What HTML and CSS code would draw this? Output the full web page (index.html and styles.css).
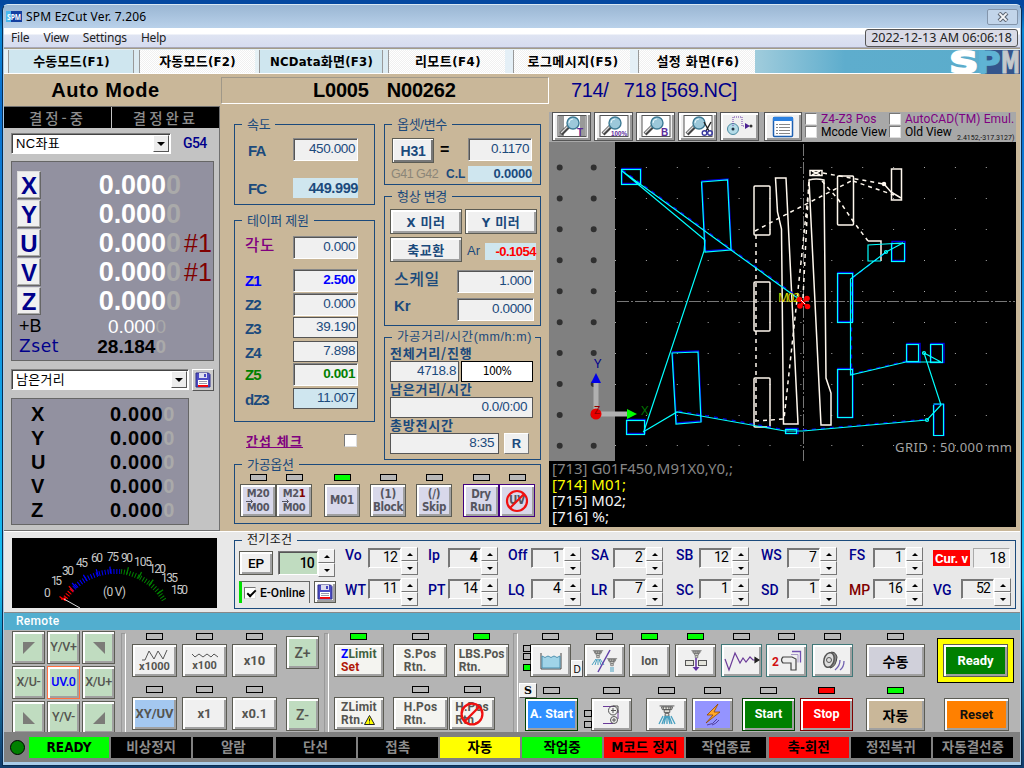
FILE: index.html
```html
<!DOCTYPE html>
<html lang="ko">
<head>
<meta charset="utf-8">
<title>SPM EzCut Ver. 7.206</title>
<link rel="stylesheet" href="styles.css">
</head>
<body>
<svg class="defs" width="0" height="0">
  <symbol id="mag" viewBox="0 0 30 22">
    <path d="M4 19 12 11" stroke="#444" stroke-width="4"/><path d="M4 18 12 10" stroke="#ddd" stroke-width="1.5"/>
    <circle cx="16" cy="8" r="6" fill="#9cc8da" stroke="#3d7a94" stroke-width="1.4"/><path d="M12 8a4 4 0 0 1 4-4" stroke="#e4f5fb" fill="none"/>
  </symbol>
  <symbol id="floppy" viewBox="0 0 16 16">
    <path d="M1 1h12.5L15 2.5V15H1z" fill="#4c4cc4" stroke="#30308a"/><rect x="4" y="1" width="8" height="5" fill="#dde"/><rect x="9" y="2" width="2" height="3" fill="#4646c0"/>
    <rect x="3" y="8" width="10" height="6" fill="#fff"/><path d="M4 9.5h8M4 11.5h8" stroke="#99a"/><rect x="3" y="13" width="10" height="1.8" fill="red"/>
  </symbol>
  <symbol id="ban" viewBox="0 0 24 24"><circle cx="12" cy="12" r="10" fill="none" stroke="#f01010" stroke-width="2.2"/><path d="M19 5 5 19" stroke="#f01010" stroke-width="2.2"/></symbol>
  <symbol id="arrow" viewBox="0 0 8 5"><path d="M0 2.500h6M4.500 .5l2 2-2 2" fill="none" stroke="#555560"/></symbol>
  <symbol id="nozzle" viewBox="0 0 16 14"><path d="M0 1h16M2 2h12l-1 3H3zM5 5h6v3H5zM6 9h4v3H6z" fill="#e8e8e0" stroke="#555"/><path d="M4 2v3M7 2v3M10 2v3M12 2v3" stroke="#555"/></symbol>
</svg>
<div class="window">
  <header class="titlebar">
    <svg width="16" height="11" viewBox="0 0 16 11"><rect width="16" height="11" fill="#1440a0"/><rect width="5" height="11" fill="#48b8f0"/><text x="1" y="9" font-size="9" font-weight="bold" fill="#fff" textLength="14" lengthAdjust="spacingAndGlyphs">SPM</text></svg>
    <span class="title">SPM EzCut Ver. 7.206</span>
    <span class="close"><svg width="12" height="10" viewBox="0 0 12 10"><path d="M2 1 10 9M10 1 2 9" stroke="#5c6674" stroke-width="4"/><path d="M2.4 1.4 9.6 8.6M9.6 1.4 2.4 8.6" stroke="#f4f6f8" stroke-width="2"/></svg></span>
  </header>
  <nav class="menubar"><span>File</span><span>View</span><span>Settings</span><span>Help</span><span class="clock">2022-12-13 AM 06:06:18</span></nav>
  <nav class="tabs">
    <div class="tab t1 blue">수동모드(F1)</div><div class="tab t2">자동모드(F2)</div><div class="tab t3 blue">NCData화면(F3)</div>
    <div class="tab t4">리모트(F4)</div><div class="tab t5">로그메시지(F5)</div><div class="tab t6">설정 화면(F6)</div>
    <div class="brand"><svg width="70" height="24" viewBox="950 49 70 24"><rect x="981" y="49" width="39" height="24" fill="#34558c"/><path d="M981 49h4q-6 12 0 24h-4z" fill="#5aaecb"/>
      <g font-weight="bold" font-size="30" stroke-width="2"><text x="949.500" y="72" fill="#fff" stroke="#fff" textLength="29" lengthAdjust="spacingAndGlyphs">S</text><text x="977" y="72" fill="#5fb3d4" stroke="#5fb3d4" stroke-width="1" textLength="24" lengthAdjust="spacingAndGlyphs">P</text><text x="1001" y="72" fill="#c4c8cc" stroke="#c4c8cc" stroke-width="1" textLength="19" lengthAdjust="spacingAndGlyphs">M</text></g></svg></div>
  </nav>

  <main class="main">
    <section class="left">
      <h1>Auto Mode</h1>
      <div class="coords">
        <div class="decide"><span>결정-중</span><span>결정완료</span></div>
        <div class="selrow"><div class="select s1"><span>NC좌표</span><i></i></div><b class="g54">G54</b></div>
        <div class="axes">
          <div class="axis"><b class="ax">X</b><b class="num">0.000<em>0</em></b></div>
          <div class="axis"><b class="ax">Y</b><b class="num">0.000<em>0</em></b></div>
          <div class="axis"><b class="ax">U</b><b class="num">0.000<em>0</em></b><span class="hash">#1</span></div>
          <div class="axis"><b class="ax">V</b><b class="num">0.000<em>0</em></b><span class="hash">#1</span></div>
          <div class="axis"><b class="ax">Z</b><b class="num">0.000<em>0</em></b></div>
          <div class="sub"><span class="k">+B</span><span class="v white">0.000<em>0</em></span></div>
          <div class="sub"><span class="k navy">Zset</span><span class="v bold">28.184<em>0</em></span></div>
        </div>
        <div class="selrow two"><div class="select s2"><span>남은거리</span><i></i></div><span class="save"><svg width="16" height="16"><use href="#floppy"/></svg></span></div>
        <div class="remain">
          <div><b>X</b><b>0.000<em>0</em></b></div><div><b>Y</b><b>0.000<em>0</em></b></div><div><b>U</b><b>0.000<em>0</em></b></div><div><b>V</b><b>0.000<em>0</em></b></div><div><b>Z</b><b>0.000<em>0</em></b></div>
        </div>
      </div>
    </section>

    <section class="right">
      <div class="prog"><div class="lbox"><span>L0005</span><span>N00262</span></div><div class="nc">714/&nbsp;&nbsp; 718 [569.NC]</div></div>
      <div class="body">
        <div class="mid">
          <div class="cols">
            <div class="colA">
              <div class="group speed"><span class="lg">속도</span>
                <div class="row fa"><b>FA</b><span class="f in">450.000</span></div>
                <div class="row fc"><b>FC</b><span class="f lit">449.999</span></div>
              </div>
              <div class="group taper"><span class="lg">테이퍼 제원</span>
                <div class="tg">
                  <span class="ang">각도</span><span class="f in">0.000</span>
                  <b class="c-blue">Z1</b><span class="f in c-blue bold">2.500</span>
                  <b>Z2</b><span class="f in">0.000</span>
                  <b>Z3</b><span class="f flat">39.190</span>
                  <b>Z4</b><span class="f flat">7.898</span>
                  <b class="c-green">Z5</b><span class="f in c-green bold">0.001</span>
                  <b>dZ3</b><span class="f flat cy">11.007</span>
                </div>
              </div>
              <div class="inter"><u>간섭 체크</u><i class="cb"></i></div>
            </div>
            <div class="colB">
              <div class="group offset"><span class="lg">옵셋/변수</span>
                <div class="row o1"><span class="btn h31">H31</span><b class="eq">=</b><span class="f in">0.1170</span></div>
                <div class="row o2"><span class="g41">G41 G42</span><b class="cl">C.L</b><span class="f lit">0.0000</span></div>
              </div>
              <div class="group shape"><span class="lg">형상 변경</span>
                <div class="row m1"><span class="btn">X 미러</span><span class="btn">Y 미러</span></div>
                <div class="row m2"><span class="btn">축교환</span><span class="ar">Ar</span><span class="f lit red">-0.1054</span></div>
                <div class="row m3"><b class="ko">스케일</b><span class="f in">1.000</span></div>
                <div class="row m4"><b>Kr</b><span class="f in">0.0000</span></div>
              </div>
              <div class="group dist"><span class="lg">가공거리/시간(mm/h:m)</span>
                <b class="dl">전체거리/진행</b>
                <div class="row"><span class="f flat w69">4718.8</span><span class="pct">100%</span></div>
                <b class="dl">남은거리/시간</b>
                <div class="row"><span class="f flat w143">0.0/0:00</span></div>
                <b class="dl">총방전시간</b>
                <div class="row"><span class="f flat w109">8:35</span><span class="rbtn">R</span></div>
              </div>
            </div>
          </div>
          <div class="group opts"><span class="lg">가공옵션</span>
            <div class="og">
              <div class="u"><i class="led"></i><span class="btn ob two-l">M20<br>M00<svg class="arr" width="8" height="5"><use href="#arrow"/></svg></span></div>
              <div class="u"><i class="led"></i><span class="btn ob two-l"><span>M2<s>1</s></span>M00<svg class="arr" width="8" height="5"><use href="#arrow"/></svg></span></div>
              <div class="u"><i class="led on"></i><span class="btn ob">M01</span></div>
              <div class="u"><i class="led"></i><span class="btn ob">(1)<br>Block</span></div>
              <div class="u"><i class="led"></i><span class="btn ob">(/)<br>Skip</span></div>
              <div class="u"><i class="led"></i><span class="btn ob pur">Dry<br>Run</span></div>
              <div class="u"><i class="led"></i><span class="btn ob pur">UV<svg class="over" width="24" height="24"><use href="#ban"/></svg></span></div>
            </div>
          </div>
        </div>

        <div class="view">
          <div class="toolbar">
            <span class="tb"><svg width="30" height="23" viewBox="0 0 30 23"><rect x="1" y="0.5" width="28" height="21" fill="#fff" stroke="#555"/><rect x="2" y="1" width="5" height="20" fill="#999"/><rect x="23" y="1" width="5" height="20" fill="#999"/><use href="#mag" width="30" height="22"/><text x="20" y="21" class="tl">T</text></svg></span>
            <span class="tb"><svg width="30" height="23" viewBox="0 0 30 23"><rect x="1" y="0.5" width="28" height="21" fill="#fff" stroke="#555"/><use href="#mag" width="30" height="22"/><text x="12" y="21" font-size="8" font-weight="bold" fill="#5a2a9a" textLength="16" lengthAdjust="spacingAndGlyphs">100%</text></svg></span>
            <span class="tb"><svg width="30" height="23" viewBox="0 0 30 23"><rect x="1" y="0.5" width="28" height="21" fill="#fff" stroke="#555"/><use href="#mag" width="30" height="22"/><text x="20" y="21" class="tl">B</text></svg></span>
            <span class="tb"><svg width="30" height="23" viewBox="0 0 30 23"><rect x="1" y="0.5" width="28" height="21" fill="#fff" stroke="#555"/><use href="#mag" width="30" height="22"/><path d="M21 7l5 9M28 7l-5 9" stroke="#222" stroke-width="1.4"/><circle cx="21.500" cy="18" r="2.300" fill="none" stroke="#3a3aa0" stroke-width="1.400"/><circle cx="27" cy="18" r="2.300" fill="none" stroke="#3a3aa0" stroke-width="1.400"/></svg></span>
            <span class="tb"><svg width="30" height="23" viewBox="0 0 30 23"><circle cx="8" cy="14" r="5.500" fill="#b4dce8" stroke="#4a8aa0"/><circle cx="8" cy="14" r="1.500" fill="#234"/><path d="M8 11V2h9v9h4" fill="none" stroke="#6a3aa8" stroke-dasharray="1 1"/><path d="M20 8l5 3-5 3z" fill="#4a2090"/><circle cx="26" cy="11" r="1.500" fill="#333"/></svg></span>
            <span class="tb last"><svg width="22" height="22" viewBox="0 0 22 22"><rect x="1.500" y="1.500" width="19" height="19" rx="1" fill="#fff" stroke="#1c5fb0" stroke-width="1.500"/><rect x="1" y="1" width="20" height="4" fill="#2a80e0"/><path d="M4 8.500h2M4 11.500h2M4 14.500h2M4 17.500h2M7 8.500h11M7 11.500h11M7 14.500h11M7 17.500h11" stroke="#888"/></svg></span>
            <div class="checks">
              <div><i class="cb"></i><span class="pp c1">Z4-Z3 Pos</span><i class="cb"></i><span class="pp">AutoCAD(TM) Emul.</span></div>
              <div><i class="cb"></i><span class="c1">Mcode View</span><i class="cb"></i><span class="ov">Old View</span><small>2.4152,-317.3127)</small></div>
            </div>
          </div>
          <svg class="cad" width="467" height="385" viewBox="549 142 467 385" fill="none">
            <rect x="549" y="142" width="467" height="385" fill="#000"/>
            <rect x="549" y="142" width="66" height="319" fill="#808080"/>
            <g stroke="#303030" stroke-width="6" stroke-linecap="round" stroke-dasharray="0 30.93"><path d="M559.700 167.500V450"/><path d="M593.700 167.500V450"/></g>
            <g stroke="#aaa" stroke-dasharray="1 29.900"><path d="M615 167.500h380M615 198.500h380M615 229.500h380M615 260.500h380M615 291.500h380M615 322.500h380M615 353.500h380M615 384.500h380M615 415.500h380M615 445.500h380"/></g>
            <path d="M617 301.500h398M803.500 144v317" stroke="#777" stroke-dasharray="12 2 2 2"/>
            <g stroke="#fff8ee" stroke-width="1.500">
              <rect x="754" y="186" width="16" height="49" rx="1"/><rect x="754" y="282" width="16" height="49" rx="1"/><rect x="754" y="378" width="16" height="49" rx="1"/>
              <rect x="837.500" y="176" width="16" height="49" rx="1"/><rect x="891.500" y="169" width="10" height="31"/><rect x="810" y="170.500" width="12" height="5"/>
              <path d="M868 241h13v20M775.500 178h10.500l12 246h-14.500l-2-195-4-17zM809 180q7-2 15 0l2 198 5 15v32h-10z"/>
              <circle cx="884" cy="184" r="1.500" fill="#fff"/><path d="M812 171l8 4M812 175l8-4M884 184l7 8 10 6"/>
              <path stroke-dasharray="4 4" d="M755 231l28-15 70-36M756 235v185M755 421l29-2 10-92 8-74 7-68M803 298l6-120M823 173l61 11M853 181l41 14M822 181l16 18 15 22 15 20"/>
            </g>
            <g stroke="#0000e0" stroke-width="1.400" transform="translate(.5,-1)">
              <rect x="621.500" y="169.500" width="19" height="15"/><path d="M701.500 182l26-2 3.500 70-26 2zM672 353l26-1 3 70-25 2z"/><rect x="626.500" y="420.500" width="18" height="14"/>
              <rect x="785.500" y="429.500" width="12" height="5"/><rect x="933.500" y="405.500" width="10" height="31"/><rect x="906.500" y="344.500" width="13" height="19"/><rect x="930.500" y="344.500" width="13" height="19"/><rect x="837.500" y="369.500" width="15" height="49"/><rect x="837.500" y="273.500" width="15" height="49"/><rect x="891.500" y="242.500" width="13" height="19"/>
              <path stroke-dasharray="4 5" d="M622 171l109 79 72 52M678 412l24 4 84 15h18l124-11M906 362l-55 13V279M852 279l35-27"/>
            </g>
            <g stroke="#00ffff" stroke-width="1.200">
              <rect x="621.500" y="169.500" width="19" height="15"/><path d="M701.500 182l26-2 3.500 70-26 2zM672 353l26-1 3 70-25 2z"/><rect x="626.500" y="420.500" width="18" height="14"/>
              <path d="M622 171l83 69-1 11-60 180M622 171l109 79 72 52M643 432l34-20 24 4 84 15h18l124-11 14-15-17-52 17 9h-35l-55.500 13V279l35.500-27 17-9-35 2v16h13"/>
              <rect x="785.500" y="429.500" width="11" height="4"/><path d="M933.500 405v30.500h10V404h-10"/><rect x="906.500" y="344.500" width="12" height="17"/><rect x="930.500" y="344.500" width="12" height="18"/><rect x="837.500" y="369.500" width="15" height="48"/><rect x="837.500" y="273.500" width="15" height="49"/><rect x="891.500" y="243.500" width="13" height="18"/>
              <circle cx="927" cy="420" r="1.500"/><circle cx="924" cy="353" r="1.500"/><circle cx="886" cy="252" r="1.500"/>
            </g>
            <text x="778" y="302" fill="#d8d800" font-size="12" textLength="22" class="ns">M02</text>
            <g fill="red"><circle cx="799.500" cy="299.500" r="2.800"/><circle cx="807" cy="298.500" r="2.800"/><circle cx="800" cy="306" r="2.800"/><circle cx="807.500" cy="306.500" r="2.800"/></g><path d="M799 299l9 8M807 298l-7 8" stroke="red" stroke-width="2"/><path d="M801 300l4 4" stroke="#fff"/>
            <rect x="593.500" y="383" width="5" height="29" fill="#b0b0b0"/><rect x="598" y="411.500" width="29" height="5" fill="#b0b0b0"/><path d="M596 373l5 10h-10z" fill="#0000e8"/><path d="M637 414l-10-5v10z" fill="#00ff00"/><circle cx="596" cy="414" r="5.500" fill="#e80000"/>
            <g class="ns" font-size="13"><text x="594" y="368" fill="#00008c">Y</text><text x="641" y="415" fill="#007000">X</text><text x="594" y="414" fill="#8c0000" font-size="11">Z</text>
            <text x="895" y="452" fill="#a4a4a4" textLength="117">GRID : 50.000 mm</text></g>
            <g class="ns" font-size="14" fill="#f4f4f4"><text x="552" y="474" fill="#868686" textLength="181" lengthAdjust="spacingAndGlyphs">[713] G01F450,M91X0,Y0,;</text><text x="552" y="490" fill="#ff0" textLength="74" lengthAdjust="spacingAndGlyphs">[714] M01;</text><text x="552" y="506" textLength="74" lengthAdjust="spacingAndGlyphs">[715] M02;</text><text x="552" y="522" textLength="57" lengthAdjust="spacingAndGlyphs">[716] %;</text></g>
          </svg>
        </div>
      </div>
    </section>
  </main>

  <section class="elec">
    <svg class="meter" width="205" height="70" viewBox="12 538 205 70" fill="none"><rect x="12" y="538" width="205" height="70" fill="#000"/>
      <g stroke-width="5" stroke-dasharray="1 1.900"><path d="M64 600A60 58 0 0 1 72 590" stroke="red"/><path d="M72 590A60 58 0 0 1 120 571.500" stroke="#0000ff"/><path d="M121 571.500A60 58 0 0 1 164 600" stroke="#008000"/></g>
      <g stroke-width="7" stroke-dasharray="1.200 12"><path d="M62 599A60 58 0 0 1 72 588" stroke="red"/><path d="M74 586A60 58 0 0 1 120 570" stroke="#0000ff"/><path d="M127 570.500A60 58 0 0 1 165 599" stroke="#008000"/></g>
      <path d="M61 599l5-1" stroke="red" stroke-width="1.500"/><path d="M64 599l16 9" stroke="#ddd"/>
      <g fill="#c8c8c8" font-size="12" class="rb"><text x="44" y="597">0</text><text x="51" y="585" textLength="11">15</text><text x="62" y="575" textLength="12">30</text><text x="76" y="567" textLength="12">45</text><text x="91" y="562" textLength="12">60</text><text x="107" y="561" textLength="12">75</text><text x="121" y="562" textLength="12">90</text><text x="134" y="566" textLength="18">105</text><text x="149" y="573" textLength="17">120</text><text x="161" y="582" textLength="17">135</text><text x="171" y="594" textLength="17">150</text><text x="103" y="596" textLength="23">(0 V)</text></g>
    </svg>
    <div class="group cond"><span class="lg">전기조건</span>
      <div class="cw">
        <div class="ep">
          <div class="row"><span class="btn epb">EP</span><span class="tens">10</span><span class="spin big"><i></i><i></i></span></div>
          <div class="row"><span class="eon"><i class="cb chk"></i>E-Online</span><span class="btn sv"><svg width="16" height="16"><use href="#floppy"/></svg></span></div>
        </div>
        <div class="params">
          <div class="p w23"><b>Vo</b><span>12</span><div class="spin"><i></i><i></i></div></div>
          <div class="p w20"><b>Ip</b><span class="bold">4</span><div class="spin"><i></i><i></i></div></div>
          <div class="p w23"><b>Off</b><span>1</span><div class="spin"><i></i><i></i></div></div>
          <div class="p w22"><b>SA</b><span>2</span><div class="spin"><i></i><i></i></div></div>
          <div class="p w23"><b>SB</b><span>12</span><div class="spin"><i></i><i></i></div></div>
          <div class="p w26"><b>WS</b><span>7</span><div class="spin"><i></i><i></i></div></div>
          <div class="p w24"><b>FS</b><span>1</span><div class="spin"><i></i><i></i></div></div>
          <div class="p cur"><b>Cur. v</b><span>18</span></div>
          <div class="p w23"><b>WT</b><span>11</span><div class="spin"><i></i><i></i></div></div>
          <div class="p w20"><b>PT</b><span>14</span><div class="spin"><i></i><i></i></div></div>
          <div class="p w23"><b>LQ</b><span>4</span><div class="spin"><i></i><i></i></div></div>
          <div class="p w22"><b>LR</b><span>7</span><div class="spin"><i></i><i></i></div></div>
          <div class="p w23"><b>SC</b><span>1</span><div class="spin"><i></i><i></i></div></div>
          <div class="p w26"><b>SD</b><span>1</span><div class="spin"><i></i><i></i></div></div>
          <div class="p w24"><b class="mp">MP</b><span>16</span><div class="spin"><i></i><i></i></div></div>
          <div class="p w28"><b>VG</b><span>52</span><div class="spin"><i></i><i></i></div></div>
        </div>
      </div>
    </div>
  </section>

  <div class="rhead">Remote</div>
  <section class="remote">
    <div class="pad">
      <span class="btn"><svg width="12" height="12"><path d="M0 0h12L0 12z"/></svg></span><span class="btn">Y/V+</span><span class="btn"><svg width="12" height="12"><path d="M0 0h12v12z"/></svg></span>
      <span class="btn">X/U-</span><span class="btn home">UV.0</span><span class="btn">X/U+</span>
      <span class="btn"><svg width="12" height="12"><path d="M0 0v12h12z"/></svg></span><span class="btn">Y/V-</span><span class="btn"><svg width="12" height="12"><path d="M12 0v12H0z"/></svg></span>
    </div>
    <i class="sep"></i>
    <div class="steps">
      <div class="u"><i class="led"></i><span class="btn"><svg width="28" height="12" fill="none" stroke="#555"><path d="M1 11h3l4-9 5 8 4-8 5 8 4-9"/></svg>x1000</span></div>
      <div class="u"><i class="led"></i><span class="btn"><svg width="28" height="10" fill="none" stroke="#555"><path d="M1 4l3 3 4-3 4 3 4-3 4 3 3-3 4 3"/></svg>x100</span></div>
      <div class="u"><i class="led"></i><span class="btn lgx">x10</span></div>
      <div class="u"><i class="led"></i><span class="btn lgx uv">XY/UV</span></div>
      <div class="u"><i class="led"></i><span class="btn lgx">x1</span></div>
      <div class="u"><i class="led"></i><span class="btn lgx">x0.1</span></div>
    </div>
    <div class="zz"><span class="btn">Z+</span><span class="btn">Z-</span></div>
    <i class="sep sep2"></i>
    <div class="rtn">
      <div class="rr">
        <div class="u z"><i class="led on"></i><span class="btn"><span><q>Z</q><tt>Limit</tt><br><s>Set</s></span></span></div>
        <div class="u s"><i class="led"></i><span class="btn"><span>S.Pos<br>Rtn.</span></span></div>
        <div class="u s"><i class="led on"></i><span class="btn tight"><span>LBS.Pos<br>Rtn.</span></span></div>
      </div>
      <div class="rr r2">
        <div class="u z"><i class="led none"></i><span class="btn"><span>ZLimit<br>Rtn.<svg width="11" height="10" viewBox="0 0 11 10"><path d="M5.500 .5 10.500 9.500H.5z" fill="#ff0" stroke="#222"/><path d="M5.500 3.500v3M5.500 7.500v1" stroke="#222"/></svg></span></span></div>
        <div class="u s"><i class="led"></i><span class="btn"><span>H.Pos<br>Rtn.</span></span></div>
        <div class="u h"><i class="led"></i><span class="btn"><span>H.Pos<br>Rtn.</span><svg class="over" width="25" height="25"><use href="#ban"/></svg></span></div>
      </div>
    </div>
    <i class="sep sep3"></i>
    <div class="ops">
      <div class="r1">
        <div class="u"><i class="led"></i><span class="btn"><svg width="22" height="18"><path d="M1 1v16h20V1" fill="none" stroke="#444"/><path d="M2 4q3 3 6 0 3 3 6 0 3 3 6 0v12H2z" fill="#a0d4e8" stroke="#4a90b0"/></svg></span><i class="mini m-a"></i><i class="mini m-b"></i><i class="mini m-c"></i><span class="tag d">D</span></div>
        <div class="u"><i class="led"></i><span class="btn"><svg width="30" height="24"><use href="#nozzle" x="2" y="1" width="12" height="9"/><path d="M6 10l-4 6M8 10v6M10 10l4 6M7 10l-2 6M9 10l2 6" stroke="#48a0c0"/><path d="M20 1 8 23" stroke="#6040a8" stroke-width="1.500"/><use href="#nozzle" x="16" y="9" width="12" height="9"/><path d="M21 18v5M23 18v5" stroke="#48a0c0"/></svg></span></div>
        <div class="u"><i class="led on"></i><span class="btn lgx">Ion</span></div>
        <div class="u"><i class="led on"></i><span class="btn"><svg width="24" height="24"><use href="#nozzle" x="6" y="1" width="13" height="9"/><rect x="1.500" y="11.500" width="8" height="5" fill="#e4e4dc" stroke="#555"/><rect x="14.500" y="11.500" width="8" height="5" fill="#e4e4dc" stroke="#555"/><path d="M12 9v10" stroke="#6030a0" stroke-width="1.500"/><path d="M8.500 18h7L12 22z" fill="#6030a0"/></svg></span></div>
        <div class="u"><i class="led"></i><span class="btn teal"><svg width="36" height="24" fill="none" stroke="#6a3a98" stroke-width="1.200"><path d="M1 10l4 11 6-17 5 10 3-5 3 4 4-5 3 3h3"/><path d="M31 8.500l4 2.500-4 2.500z" fill="#222" stroke="#222"/></svg></span></div>
        <div class="u"><i class="led"></i><span class="btn teal"><svg width="32" height="24" fill="none"><text x="1" y="17" class="rb" font-weight="bold" font-size="12" fill="#d01010">2</text><path d="M12 8h9l4 2v11h-5v-7h-8q-3-3 0-6z" fill="#eee" stroke="#444" stroke-width="1.200"/><path d="M21 2.500h8.500v11" stroke="#7050b0" stroke-width="1.300"/><path d="M20 5.500h7v8" stroke="#a898c8"/></svg></span></div>
        <div class="u"><i class="led"></i><span class="btn teal"><svg width="26" height="24" fill="none"><path d="M9 4q6-3 8 4-1 10-7 11z" fill="#888" stroke="#444"/><ellipse cx="9" cy="11" rx="5" ry="7.500" transform="rotate(15 9 11)" fill="#ddd" stroke="#555" stroke-width="1.500"/><circle cx="9" cy="11" r="2.500" stroke="#555"/><path d="M20 11q0 6-5 10M24 12q0 6-4 9" stroke="#7060b0" stroke-width="1.300"/></svg></span></div>
        <div class="u wide"><i class="led"></i><span class="btn kob man">수동</span></div>
        <div class="ready"><span class="btn">Ready</span></div>
      </div>
      <div class="r2o">
        <div class="u"><i class="led"></i><span class="btn ast">A. Start</span><span class="tag sg">S</span></div>
        <div class="u"><i class="led"></i><span class="btn"><svg width="20" height="22" fill="none" stroke="#555"><path d="M1 2.500h12M1 19.500h10M16 6v9" stroke="#6a3a98"/><circle cx="11" cy="6.500" r="4.500"/><path d="M11 2h5v7M11 4v5M9 6.500h5"/><circle cx="12" cy="16" r="3.500"/><path d="M10 16h4M12 14v4"/></svg></span><i class="mini m-d"></i><i class="mini m-e"></i></div>
        <div class="u"><i class="led"></i><span class="btn"><svg width="22" height="22"><use href="#nozzle" x="2" y="1" width="18" height="13"/><path d="M7 12 3 20M9 12 6 20M11 12v8M13 12l3 8M15 12l4 8M10 12l-2 8M12 12l2 8" stroke="#48a0c0" stroke-width="1.300"/></svg></span></div>
        <div class="u"><i class="led"></i><span class="btn bolt"><svg width="22" height="24"><path d="M16 1 5 12h6L4 20 18 9h-6z" fill="#ffa828" stroke="#904800" stroke-width=".8"/><path d="M5 22q6 0 10-6M10 22q4-1 7-5" fill="none" stroke="#5040a0"/></svg></span></div>
        <div class="u x53"><i class="led"></i><span class="btn start">Start</span></div>
        <div class="u x53"><i class="led redl"></i><span class="btn stop">Stop</span></div>
        <div class="u wide"><i class="led on"></i><span class="btn kob aut">자동</span></div>
        <div class="u rst"><i class="led none"></i><span class="btn">Reset</span></div>
      </div>
    </div>
  </section>
  <footer class="status">
    <i class="lamp"></i>
    <div class="cells"><span class="g en">READY</span><span>비상정지</span><span>알람</span><span>단선</span><span>접촉</span><span class="y">자동</span><span class="g">작업중</span><span class="r">M코드 정지</span><span>작업종료</span><span class="r">축-회전</span><span>정전복귀</span><span>자동결선중</span></div>
  </footer>
</div>
</body>
</html>
```
FILE: styles.css
```css
* { box-sizing: border-box; }
body { margin: 0; width: 1024px; height: 768px; overflow: hidden; background: linear-gradient(#0448a0 0 5px, #0a8ad8 30px, #0a6fd0 100px, #16c0f4 75%, #123c6c); font-family: "Liberation Sans", "Noto Sans CJK KR", sans-serif; font-size: 13px; line-height: 1; color: #000; padding: 4px 2px 0; white-space: nowrap; }
em, i, s, u, q, tt, small { font-style: normal; text-decoration: none; font-family: inherit; }
q::before, q::after { content: none; }
.defs { display: block; height: 0; }
.window { width: 1020px; height: 762px; border: 1px solid #0a2c50; border-top-color: #d8e8f4; border-radius: 6px 6px 0 0; padding: 0 1px; background: #a9cce9; display: flex; flex-direction: column; overflow: hidden; }
.ns { font-family: "Noto Sans", "Noto Sans CJK KR", sans-serif; font-weight: 400; }
.rb { font-family: Roboto, "Liberation Sans", sans-serif; }
.bold { font-weight: bold; }
.navy { color: #00008b; }

.titlebar { height: 23px; display: flex; align-items: center; padding: 0 0 0 2px; background: linear-gradient(#9ab6d3, #b9d1ea); font: 12px "Noto Sans", sans-serif; }
.title { margin-left: 4px; letter-spacing: .2px; flex: 1; }
.close { width: 31px; height: 16px; border: 1px solid #8395ab; border-radius: 2px; background: #c2d5ea; margin: 1px 2px 0 0; display: flex; align-items: center; justify-content: center; }
.menubar { height: 20px; display: flex; align-items: center; background: linear-gradient(#fff 0 6px, #dfe4f2 7px, #d6dcf0); border-bottom: 1px solid #a8a8b8; font: 12px "Noto Sans", sans-serif; color: #222; padding-left: 7px; }
.menubar span { margin-right: 14px; letter-spacing: -.2px; }
.menubar .clock { margin: 0 2px 0 auto; width: 153px; height: 18px; border: 1px solid #555; border-radius: 3px; background: #dadbe6; text-align: center; line-height: 16px; font-size: 12.5px; letter-spacing: 0; }
.tabs { height: 26px; padding-top: 1px; border-top: 1px solid #a49c88; border-bottom: 1px solid #fff; background: #e4eff6; display: flex; font: bold 13px "DejaVu Sans Condensed", "Noto Sans CJK KR", sans-serif; letter-spacing: .25px; }
.tab { height: 23px; line-height: 24px; text-align: center; background: repeating-conic-gradient(#fff 0 25%, #f0f0f0 0 50%) 0 0/2px 2px; border-left: 1px solid #999; margin-right: 8px; width: 117px; }
.tab.blue { background: #cfe6ef; border-left: 0; margin-right: 0; width: 133px; box-shadow: inset 4px 0 #e6f1f5, inset 5px 0 #999, inset -5px 0 #dcebf2, inset -6px 0 #999; }
.tab.t1 { width: 135px; }
.tab.t2 { width: 116px; margin-right: 0; } .t4, .t5, .t6 { letter-spacing: .5px; padding-left: 2px; }
.brand { flex: 1; display: flex; justify-content: flex-end; margin-left: -8px; background: linear-gradient(90deg, #a0ccdc, #5eadcd 90px, #5aaccb); }
.brand svg { display: block; }

.main { height: 457px; display: flex; background: #c9b799; }
.left { width: 216px; }
h1 { margin: 0; height: 32px; line-height: 32px; font-size: 20px; text-align: center; padding-right: 13px; letter-spacing: .55px; }
.coords { height: 425px; background: #c3c3c3; border: 1px solid #707070; border-left: 0; padding-left: 0; }
.decide { height: 21px; display: flex; gap: 1px; font: 500 14.5px/21px "Noto Sans CJK KR", sans-serif; color: #8c8c8c; letter-spacing: 3px; }
.decide span { background: #000; flex: 1; text-align: center; }
.selrow { display: flex; padding: 5px 0 0 7px; height: 26px; }
.select { height: 21px; background: #fff; border: 1px solid; border-color: #808080 #fff #fff #808080; box-shadow: inset 1px 1px #444; display: flex; justify-content: space-between; font: 13px/20px "Liberation Sans", "Noto Sans CJK KR", sans-serif; padding: 1px 1px 1px 4px; }
.select span { line-height: 18px; letter-spacing: .3px; }
.s1 { width: 160px; } .s2 { width: 178px; }
.select i { width: 16px; background: #ececec; border: 1px solid; border-color: #fff #555 #555 #fff; display: grid; place-items: center; }
.select i::after { content: ""; border: 4px solid transparent; border-top-color: #000; border-bottom: 0; }
.g54 { font: 500 14px/20px Roboto, sans-serif; color: #00008b; margin-left: 12px; letter-spacing: -.6px; }
.axes { margin: 7px 0 0 7px; width: 203px; height: 200px; background: #9291a0; border: 1px solid #666; padding: 8px 0 0 5px; }
.axis { height: 29px; display: flex; }
.ax { width: 24px; height: 28px; margin-top: 1px; background: #f0f0f0; border: 1px solid #ddd; border-right-color: #666; border-bottom-color: #666; box-shadow: inset -1px -1px #aaa; font-size: 24px; line-height: 28px; text-align: center; color: #00008b; }
.num { width: 140px; text-align: right; color: #fff; font-size: 27px; line-height: 30px; letter-spacing: -.05px; }
.num em, .sub em, .remain em { color: #aaa; font-weight: inherit; }
.hash { color: #800000; font-size: 25px; line-height: 31px; margin-left: 3px; }
.sub { height: 20px; display: flex; padding: 2px 0 0 2px; }
.k { width: 60px; font-size: 18px; line-height: 19px; } .k.navy { font-family: "DejaVu Sans", sans-serif; font-size: 17px; letter-spacing: .6px; }
.v { width: 87px; text-align: right; font-size: 19px; line-height: 19px; letter-spacing: 0; } .white { color: #fff; }
.two { margin-top: 2px; padding-top: 6px; height: 27px; margin-bottom: 1px; gap: 3px; }
.save { width: 22px; height: 22px; background: #ccc; border: 1px solid; border-color: #fff #555 #555 #fff; display: grid; place-items: center; }
.remain { margin: 8px 0 0 7px; width: 178px; height: 127px; background: #9291a0; border: 1px solid #666; padding-top: 3px; font-size: 20px; }
.remain div { display: flex; height: 24px; line-height: 25px; padding-left: 19px; }
.remain b:last-child { margin-left: auto; margin-right: 13px; letter-spacing: .65px; }

.right { flex: 1; }
.prog { height: 38px; display: flex; padding: 3px 0 0 1px; }
.lbox { width: 328px; height: 27px; border: 1px solid; border-color: #a09888 #fff #fff #a09888; display: flex; gap: 18px; padding-left: 91px; font: bold 20px/25px "Liberation Sans", sans-serif; letter-spacing: -.2px; }
.nc { font-size: 20px; line-height: 26px; color: #00008b; margin-left: 22px; letter-spacing: -.4px; }
.body { display: flex; }
.mid { width: 329px; padding: 12px 0 0 14px; color: #1b4a7c; }
.cols { display: flex; gap: 9px; height: 340px; }
.colA { width: 141px; } .colB { width: 157px; }
.group { border: 1px solid #1b4a7c; }
.lg { display: block; width: fit-content; height: 16px; margin: -8px 0 0 7px; padding: 0 5px; background: #c9b799; font: 13px/15px "Liberation Sans", "Noto Sans CJK KR", sans-serif; letter-spacing: -.3px; }
.row { display: flex; }
.f { height: 23px; text-align: right; font: 13.5px/20px "Liberation Sans", sans-serif; padding-right: 2px; letter-spacing: -.4px; background: #f0f0f0; border: 1px solid; color: #1b4a7c; }
.in { border-color: #888 #fff #fff #888; box-shadow: inset 1px 1px #555; }
.flat { height: 21px; border-color: #555; line-height: 18px; }
.lit { background: #cfe6ef; border: 0; height: 20px; padding-right: 0; font-weight: bold; }
.f.bold { font-weight: bold; }
.c-blue, .f.c-blue { color: #0000ff; } .c-green, .f.c-green { color: #008000; } .f.red { color: red; } .f.cy { background: #cfe6ef; }
.f.in { border-color: #888 #fff #fff #888; } .f.flat { border-color: #555; }
.speed { height: 81px; margin-bottom: 15px; }
.speed .row { padding-left: 13px; }
.speed b { width: 45px; font-size: 15px; line-height: 26px; letter-spacing: -.9px; }
.speed .f { width: 65px; }
.fa { margin-top: 5px; height: 40px; } .fc b { line-height: 21px; } .fc .f { font-size: 14.5px; }
.taper { height: 202px; margin-bottom: 12px; }
.tg { display: grid; grid-template-columns: 48px 65px; grid-template-rows: 33px 24px 24px 24px 22px 25px 21px; align-items: start; padding: 7px 0 0 10px; }
.tg b { font-size: 15px; line-height: 24px; letter-spacing: -1px; }
.ang { color: #800080; font: 500 15.5px/16px "Noto Sans CJK KR", sans-serif; letter-spacing: .8px; }
.inter { display: flex; padding-left: 12px; }
.inter u { text-decoration: underline; color: #800080; font: bold 13px/14px "Noto Sans CJK KR", sans-serif; letter-spacing: 1.1px; width: 98px; }
.cb { width: 13px; height: 13px; flex: none; background: #fff; border: 1px solid; border-color: #777 #ddd #ddd #777; }
.btn { display: flex; align-items: center; justify-content: center; flex-direction: column; text-align: center; background: #f0f0f0; border: 1px solid #5c5c54; box-shadow: inset 2px 2px #fff, inset -2px -2px #a0a0a0; position: relative; }
.btn svg { display: block; }
.offset { height: 61px; margin-bottom: 11px; }
.o1 { padding: 5px 0 0 7px; } .h31 { width: 42px; height: 25px; font: bold 14px "Liberation Sans", sans-serif; letter-spacing: -.3px; box-shadow: inset 1px 1px #fff, inset -2px -2px #777; }
.eq { color: #000; width: 34px; font-size: 16px; line-height: 24px; padding-left: 6px; }
.o1 .f { width: 64px; } .o2 { padding-left: 6px; margin-top: 3px; } .g41 { color: #8c8678; width: 55px; font: 12.5px/16px "Liberation Sans", sans-serif; letter-spacing: -.5px; } .cl { width: 22px; font-size: 12px; line-height: 16px; }
.o2 .f { width: 64px; height: 16px; line-height: 16px; font-size: 13px; letter-spacing: -.2px; }
.shape { height: 130px; margin-bottom: 11px; }
.m1 { padding: 4px 0 3px 5px; gap: 3px; } .m1 .btn, .m2 .btn { width: 72px; height: 25px; font: bold 13px "DejaVu Sans Condensed", "Noto Sans CJK KR", sans-serif; letter-spacing: .5px; }
.m2 { padding-left: 5px; } .ar { width: 23px; padding-left: 5px; line-height: 27px; font-size: 13px; } .m2 .f { width: 51px; height: 17px; margin-top: 6px; line-height: 18px; font-size: 13px; letter-spacing: -.5px; }
.m3, .m4 { padding: 6px 0 0 9px; height: 29px; } .m3 b, .m4 b { width: 63px; font: bold 15px/20px "Liberation Sans", "Noto Sans CJK KR", sans-serif; } .m3 b.ko { font-size: 16px; font-weight: 500; letter-spacing: .5px; } .m4 { padding-top: 5px; } .m4 b { line-height: 16px; } .m3 .f, .m4 .f { width: 77px; height: 23px; }
.dist { height: 123px; } .dist .lg { letter-spacing: .6px; padding-right: 3px; font-size: 12.5px; }
.dist .row { padding-left: 5px; }
.dl { display: block; height: 15px; margin: 0 0 0 5px; font: bold 13px/13px "Noto Sans CJK KR", sans-serif; letter-spacing: .8px; }
.w69 { width: 69px; margin-right: 2px; } .w143 { width: 143px; padding-right: 5px; } .w109 { width: 109px; padding-right: 4px; }
.pct { width: 72px; height: 21px; background: #fff; border: 1px solid #000; text-align: center; font: 12px/19px "DejaVu Sans Condensed", sans-serif; color: #000; letter-spacing: -.6px; }
.rbtn { width: 25px; height: 21px; margin-left: 5px; background: #f0f0f0; border: 1px solid; border-color: #fff #777 #777 #fff; text-align: center; font: bold 13px/19px "Liberation Sans", sans-serif; }
.opts { width: 307px; height: 60px; }
.og { display: grid; grid-template-columns: 36px 48px 46px 46px 47px 36px 36px; padding: 1px 0 0 5px; }
.u { position: relative; display: flex; flex-direction: column; align-items: center; gap: 4px; }
.led { width: 17px; height: 7px; flex: none; border: 1px solid #000; background: #b8b8b8; } .on { background: #00ff00; } .redl { background: red; } .none { visibility: hidden; }
.opts .u { width: 36px; gap: 3px; } .ob { width: 36px; height: 33px; background: #d8d8ea; color: #555560; font: bold 11.5px/13px "DejaVu Sans Condensed", sans-serif; letter-spacing: -.3px; }
.two-l { font-size: 11px; line-height: 14px; } .arr { position: absolute; left: 5px; top: 14px; } .ob s { color: #800000; } .pur { border-color: #400080; }
.over { position: absolute; left: 50%; top: 50%; transform: translate(-50%, -50%); }

.view { width: 467px; }
.toolbar { height: 30px; background: #a8a8a8; display: flex; padding: 0 0 0 3px; }
.tb { width: 39px; height: 29px; margin-right: 3px; background: #f0f0f0; border: 1px solid #555; box-shadow: inset 2px 2px #fff, inset -2px -2px #999; display: grid; place-items: center; }
.tb.last { margin: 0 3px 0 2px; width: 38px; } .tl { font: bold 10px "Liberation Sans", sans-serif; fill: #5a2a9a; }
.checks { font: 12px/13px Roboto, "Liberation Sans", sans-serif; padding-top: 1px; }
.checks div { display: flex; height: 13px; gap: 4px; } .checks .c1 { width: 64px; } .checks .pp { color: #800080; letter-spacing: .1px; } .checks .cb { height: 12px; width: 12px; } .checks small { font-size: 7px; line-height: 24px; color: #111; letter-spacing: .05px; } .ov { width: 48px; }
.cad { display: block; }

.elec { height: 81px; background: #e8e8e8; border-top: 1px solid #fff; display: flex; padding: 6px 0 0 8px; }
.meter { display: block; margin-right: 17px; }
.cond { width: 782px; height: 69px; margin-top: 2px; border-color: #1b4a7c; } .cond .lg { background: #e8e8e8; color: #111; letter-spacing: .3px; font-size: 12px; }
.cw { display: flex; }
.ep { width: 109px; padding: 2px 0 0 4px; } .ep .row { height: 30px; }
.epb { width: 34px; height: 24px; font: 500 13.5px Roboto, sans-serif; } .tens { width: 40px; height: 24px; margin: 0 0 0 5px; background: #c0dcc0; border: 1px solid; border-color: #777 #fff #fff #777; box-shadow: inset 1px 1px #555; text-align: right; padding-right: 3px; font: 500 14px/22px Roboto, sans-serif; letter-spacing: -.8px; }
.spin { width: 17px; height: 28px; } .spin i { height: 14px; background: #f0f0f0; border: 1px solid; border-color: #fff #777 #777 #fff; display: grid; place-items: center; }
.spin i::after { content: ""; border: 3px solid transparent; border-top: 0; border-bottom-color: #000; } .spin i + i::after { border-top: 3px solid #000; border-bottom: 0; } .big { margin-top: -2px; }
.eon { width: 71px; height: 22px; border: 1px solid #666; border-left: 3px solid #00e000; border-bottom: 0; display: flex; align-items: center; font: 500 12px Roboto, sans-serif; gap: 4px; margin-right: 4px; padding-left: 2px; letter-spacing: 0; }
.sv { width: 22px; height: 22px; }
.chk { display: grid; width: 12px; height: 12px; } .chk::after { content: ""; width: 7px; height: 3px; margin: 2px 0 0 1.5px; border: solid #000; border-width: 0 0 2px 2px; transform: rotate(-45deg); }
.params { display: grid; grid-template-columns: 83px 80px 83px 85px 85px 88px 84px 82px; grid-template-rows: 31px 28px; margin: -2px 0 0 3px; }
.p { display: flex; } .p b { font: 500 14px/16px Roboto, sans-serif; color: #00008b; letter-spacing: 0; } .p:nth-child(n+9) b { padding-top: 4px; } .p .mp { color: #800000; }
.w20 b { width: 20px; } .w22 b { width: 22px; } .w23 b { width: 23px; } .w24 b { width: 24px; } .w26 b { width: 26px; } .w28 b { width: 28px; }
.p span { width: 33px; height: 20px; margin-top: 1px; border: 1px solid; border-color: #777 #fff #fff #777; box-shadow: inset 1px 1px #777; text-align: right; padding-right: 3px; font: 14px/16px Roboto, sans-serif; letter-spacing: -.9px; background: #eee; }
.p .bold { font-weight: bold; }
.p.cur b { width: 37px; height: 16px; margin: 3px 3px 0 0; background: red; color: #fff; line-height: 17px; font-size: 13px; font-weight: bold; text-align: center; } .p.cur span { width: 37px; box-shadow: none; border-color: #aaa #fff #fff #aaa; letter-spacing: 0; font: 15px/18px Roboto, sans-serif; }

.rhead { height: 18px; background: #52aecf; border-top: 1px solid #888; color: #fff; font: 500 12px/17px Roboto, sans-serif; padding-left: 12px; letter-spacing: .3px; }
.remote { height: 102px; background: #b4b4b4; display: flex; padding-left: 8px; overflow: hidden; }
.remote .btn { color: #555550; font-family: Roboto, sans-serif; font-weight: bold; }
.pad { display: grid; grid-template: repeat(3, 33px) / repeat(3, 33px); gap: 2px; padding-top: 1px; height: 102px; } .remote .pad .btn { background: #c0dcc0; font-size: 12.5px; font-weight: 500; letter-spacing: -.3px; } .pad svg { fill: #7c7c78; } .remote .pad .home { color: #00f; border-color: #ff7040; }
.sep { width: 5px; margin: 3px 0 0 6px; border: solid; border-width: 1px 1px 0 1px; border-color: #999 #fff #fff #999; }
.steps { display: grid; grid-template: 53px 49px / repeat(3, 45px); column-gap: 5px; padding: 3px 0 0 6px; } .steps .btn { width: 45px; height: 33px; font-size: 11px; } .steps .btn.lgx { font-size: 13px; } .steps .uv { background: #a4c8f0; }
.zz { margin: 6px 0 0 9px; width: 33px; } .remote .zz .btn { height: 33px; margin-bottom: 29px; background: #c0dcc0; font-size: 14px; font-weight: 500; }
.sep2 { margin-left: 5px; }
.rtn { width: 180px; padding: 3px 0 0 5px; } .rr { display: flex; height: 53px; } .rtn .btn { height: 33px; width: 100%; font-size: 12px; line-height: 13px; background: #f4f4f0; } .rtn .btn span { text-align: left; letter-spacing: .2px; } .rtn .tight span { letter-spacing: 0; } .rtn .btn span svg { display: inline-block; vertical-align: -1px; }
.rtn .u { align-items: center; } .z { width: 50px; margin-right: 9px; } .s { width: 55px; } .s + .s { margin-left: 7px; } .h { width: 46px; margin-left: 1px; } .rtn q { color: #00f; } .rtn tt { color: #406040; } .rtn s { color: #b01808; }
.sep3 { margin-left: 4px; }
.ops { width: 500px; padding-top: 3px; } .ops .btn { width: 41px; height: 33px; } .ops .u { width: 41px; }
.r1 { display: grid; grid-template-columns: 54px 45px 46px 46px 45px 46px 54px 71px 77px; padding-left: 12px; height: 54px; } .ops .wide, .ops .wide .btn { width: 59px; }
.r2o { display: grid; grid-template-columns: 66px 55px 46px 50px 58px 66px 78px 65px; padding-left: 7px; } .r2o .u:first-child, .r2o .u:first-child .btn, .ops .x53, .ops .x53 .btn { width: 53px; } .ops .rst, .ops .rst .btn { width: 65px; }
.ops .teal { border-color: #407878; } .ops .btn.lgx { font-size: 12px; } .ops .kob { font: bold 14px "Noto Sans CJK KR", sans-serif; color: #000; } .man { background: #d0d0da; } .aut { background: #c9b799; }
.ready { width: 77px; height: 45px; margin-top: 5px; background: #ff0; border: 1px solid #000; padding: 5px; } .ops .ready .btn { width: 65px; background: #008000; color: #fff; font-size: 13px; }
.ops .start, .ops .stop, .ops .ast { color: #fff; font-size: 12.5px; } .start { background: #008000; border-color: #004000; } .stop { background: red; border-color: #800000; } .ast { background: #3090ff; border-color: #004000; } .bolt { background: #9494ff; } .rst .btn { background: #ff8000; } .ops .rst .btn { color: #111; font-size: 13px; }
.mini { position: absolute; width: 8px; height: 7px; border: 1px solid #000; left: -7px; } .m-a { top: 12px; } .m-b { top: 20px; } .m-c { top: 31px; background: #0f0; } .m-d { top: 23px; } .m-e { top: 34px; }
.tag { position: absolute; background: #f0f0f0; border: 1px solid; border-color: #fff #555 #555 #fff; text-align: center; } .d { left: 41px; top: 27px; width: 12px; height: 17px; font-size: 10px; line-height: 18px; } .sg { left: -6px; top: -4px; width: 18px; height: 15px; font: bold 11px/13px "DejaVu Serif", serif; }
.status { height: 30px; background: #808080; display: flex; padding: 5px 7px 0 6px; } .lamp { width: 15px; height: 15px; border-radius: 50%; border: 1px solid #000; background: #008000; margin: 3px 4px 0 0; }
.cells { display: grid; grid-template-columns: repeat(12, 80px); column-gap: 2.18px; } .cells span { height: 21px; background: #000; color: #8c8c8c; text-align: center; font: bold 13.5px/20px "DejaVu Sans Condensed", "Noto Sans CJK KR", sans-serif; } .cells .g { background: #0f0; color: #000; } .cells .y { background: #ff0; color: #000; } .cells .r { background: red; color: #000; }
```
